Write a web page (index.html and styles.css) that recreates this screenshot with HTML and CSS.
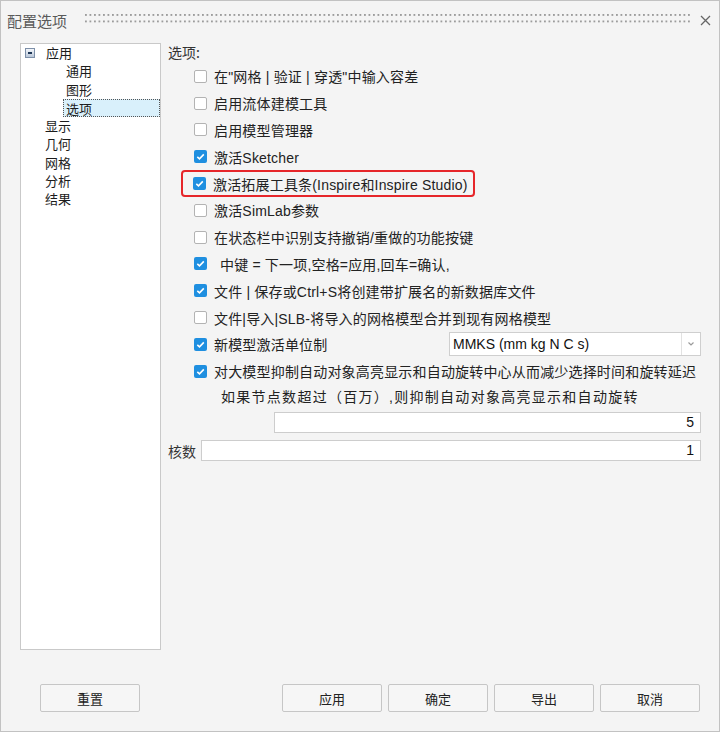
FILE: index.html
```html
<!DOCTYPE html>
<html lang="zh">
<head>
<meta charset="utf-8">
<title>配置选项</title>
<link rel="stylesheet" href="styles.css">
</head>
<body>
<div class="window">
  <div class="titlebar">
    <span class="title">配置选项</span>
    <span class="grip"></span>
    <span class="close"><svg width="11" height="11" viewBox="0 0 11 11"><path d="M1 1L10 10M10 1L1 10" stroke="#666" stroke-width="1.3" fill="none"/></svg></span>
  </div>
  <div class="main">
    <div class="tree">
      <div class="node root"><span class="exp"><i></i></span><span>应用</span></div>
      <div class="node child">通用</div>
      <div class="node child">图形</div>
      <div class="node child"><span class="sel">选项</span></div>
      <div class="node top">显示</div>
      <div class="node top">几何</div>
      <div class="node top">网格</div>
      <div class="node top">分析</div>
      <div class="node top">结果</div>
    </div>
    <div class="options">
      <div class="head">选项:</div>
      <div class="list">
        <div class="row"><span class="cb"></span><span class="lbl">在"网格 | 验证 | 穿透"中输入容差</span></div>
        <div class="row"><span class="cb"></span><span class="lbl">启用流体建模工具</span></div>
        <div class="row"><span class="cb"></span><span class="lbl">启用模型管理器</span></div>
        <div class="row"><span class="cb on"><svg width="13" height="13" viewBox="0 0 13 13"><path d="M3.3 6.8L5.5 8.8L9.8 4.4" stroke="#fff" stroke-width="1.6" fill="none"/></svg></span><span class="lbl">激活Sketcher</span></div>
        <div class="row"><span class="hl"><span class="cb on"><svg width="13" height="13" viewBox="0 0 13 13"><path d="M3.3 6.8L5.5 8.8L9.8 4.4" stroke="#fff" stroke-width="1.6" fill="none"/></svg></span><span class="lbl">激活拓展工具条(Inspire和Inspire Studio)</span></span></div>
        <div class="row"><span class="cb"></span><span class="lbl">激活SimLab参数</span></div>
        <div class="row"><span class="cb"></span><span class="lbl">在状态栏中识别支持撤销/重做的功能按键</span></div>
        <div class="row"><span class="cb on"><svg width="13" height="13" viewBox="0 0 13 13"><path d="M3.3 6.8L5.5 8.8L9.8 4.4" stroke="#fff" stroke-width="1.6" fill="none"/></svg></span><span class="lbl pad">中键 = 下一项,空格=应用,回车=确认,</span></div>
        <div class="row"><span class="cb on"><svg width="13" height="13" viewBox="0 0 13 13"><path d="M3.3 6.8L5.5 8.8L9.8 4.4" stroke="#fff" stroke-width="1.6" fill="none"/></svg></span><span class="lbl">文件 | 保存或Ctrl+S将创建带扩展名的新数据库文件</span></div>
        <div class="row"><span class="cb"></span><span class="lbl">文件|导入|SLB-将导入的网格模型合并到现有网格模型</span></div>
        <div class="row"><span class="cb on"><svg width="13" height="13" viewBox="0 0 13 13"><path d="M3.3 6.8L5.5 8.8L9.8 4.4" stroke="#fff" stroke-width="1.6" fill="none"/></svg></span><span class="lbl">新模型激活单位制</span>
          <span class="combo"><span class="combo-text">MMKS (mm kg N C s)</span><span class="combo-btn"><svg width="8" height="6" viewBox="0 0 8 6"><path d="M1.5 1.5L4 4L6.5 1.5" stroke="#9a9a9a" stroke-width="1.2" fill="none"/></svg></span></span>
        </div>
        <div class="row"><span class="cb on"><svg width="13" height="13" viewBox="0 0 13 13"><path d="M3.3 6.8L5.5 8.8L9.8 4.4" stroke="#fff" stroke-width="1.6" fill="none"/></svg></span><span class="lbl">对大模型抑制自动对象高亮显示和自动旋转中心从而减少选择时间和旋转延迟</span></div>
      </div>
      <div class="note">如果节点数超过（百万）,则抑制自动对象高亮显示和自动旋转</div>
      <div class="field-row indent"><span class="field">5</span></div>
      <div class="field-row"><span class="flabel">核数</span><span class="field">1</span></div>
    </div>
  </div>
  <div class="footer">
    <button class="btn">重置</button>
    <div class="right-btns">
      <button class="btn">应用</button>
      <button class="btn">确定</button>
      <button class="btn">导出</button>
      <button class="btn">取消</button>
    </div>
  </div>
</div>
</body>
</html>
```
FILE: styles.css
```css
html, body {
  margin: 0;
  padding: 0;
  background: #f4f4f4;
}
.window {
  width: 720px;
  height: 732px;
  box-sizing: border-box;
  border: 1px solid #c2c2c2;
  background: #f4f4f4;
  display: flex;
  flex-direction: column;
  font-family: "Liberation Sans", "Noto Sans CJK SC", sans-serif;
  color: #222;
}
.titlebar {
  height: 42px;
  display: flex;
  align-items: center;
  padding-left: 6px;
  padding-right: 8px;
  box-sizing: border-box;
}
.title {
  font-family: "Noto Sans CJK SC", sans-serif;
  font-size: 15px;
  color: #5a5a5a;
  margin-top: -4px;
  width: 78px;
}
.grip {
  width: 606px;
  height: 12px;
  margin-top: -4px;
  background-image: radial-gradient(circle at 1px 1px, #9c9c9c 0.9px, transparent 1.3px);
  background-size: 4.5px 6.5px;
}
.close {
  margin-left: 9px;
  margin-top: -4px;
  display: flex;
}
.main {
  display: flex;
  padding-left: 19px;
  padding-right: 18px;
  gap: 7px;
}
.tree {
  width: 141px;
  height: 607px;
  box-sizing: border-box;
  border: 1px solid #c9c9c9;
  background: #fff;
  font-family: "Noto Sans CJK SC", sans-serif;
  font-size: 13px;
  color: #1c1c1c;
}
.node {
  height: 18.25px;
  line-height: 18px;
  display: flex;
  align-items: center;
}
.node.root { padding-left: 4px; }
.node.top { padding-left: 24px; }
.node.child { padding-left: 45px; }
.exp {
  width: 10px;
  height: 10px;
  box-sizing: border-box;
  border: 1px solid #7d8fa8;
  background: linear-gradient(#f4f7fb, #b9c6d8);
  margin-right: 11px;
  position: relative;
  display: inline-block;
}
.exp i {
  position: absolute;
  left: 2px;
  top: 3px;
  width: 4px;
  height: 2px;
  background: #1d3655;
}
.sel {
  flex: 1;
  margin-left: -3px;
  padding-left: 2px;
  height: 18px;
  line-height: 17px;
  box-sizing: border-box;
  border: 1px dotted #555;
  background: #d9f0fb;
}
.options {
  width: 533px;
  font-size: 14px;
}
.head {
  height: 18px;
  line-height: 18px;
  color: #333;
  font-family: "Noto Sans CJK SC", sans-serif;
  margin-bottom: 2px;
}
.row {
  height: 26.8px;
  display: flex;
  align-items: center;
  padding-left: 26px;
}
.cb {
  width: 13px;
  height: 13px;
  box-sizing: border-box;
  border: 1px solid #b3b3b3;
  border-radius: 2px;
  background: #fff;
  flex: none;
  display: flex;
}
.cb.on {
  border: none;
  background: #1f8fe0;
}
.lbl {
  margin-left: 7px;
  white-space: nowrap;
  letter-spacing: 0.18px;
}
.lbl.pad { margin-left: 13px; }
.hl {
  display: flex;
  align-items: center;
  height: 27px;
  box-sizing: border-box;
  border: 2px solid #e6262a;
  border-radius: 4px;
  margin-left: -13px;
  padding-left: 10px;
  padding-right: 5px;
}
.combo {
  margin-left: auto;
  width: 252px;
  height: 24px;
  box-sizing: border-box;
  border: 1px solid #cfcfcf;
  background: #fff;
  display: flex;
  align-items: center;
}
.combo-text {
  flex: 1;
  padding-left: 3px;
  font-size: 14px;
  color: #111;
}
.combo-btn {
  width: 18px;
  height: 22px;
  border-left: 1px solid #e2e2e2;
  display: flex;
  align-items: center;
  justify-content: center;
}
.note {
  height: 25px;
  line-height: 25px;
  padding-left: 53px;
  letter-spacing: 1.28px;
  white-space: nowrap;
}
.field-row {
  display: flex;
  align-items: center;
  height: 22px;
  margin-bottom: 6px;
}
.field-row.indent { padding-left: 106px; margin-top: 2px; }
.flabel {
  width: 33px;
  font-family: "Noto Sans CJK SC", sans-serif;
  color: #333;
}
.field {
  flex: 1;
  height: 21px;
  box-sizing: border-box;
  border: 1px solid #cdcdcd;
  background: #fff;
  text-align: right;
  padding-right: 6px;
  line-height: 19px;
  font-size: 14px;
  color: #111;
}
.footer {
  display: flex;
  justify-content: space-between;
  padding: 34px 19px 0 39px;
}
.right-btns {
  display: flex;
  gap: 6px;
}
.btn {
  width: 100px;
  height: 28px;
  box-sizing: border-box;
  border: 1px solid #c6c6c6;
  border-radius: 2px;
  background: #f6f6f6;
  font-family: "Noto Sans CJK SC", sans-serif;
  font-size: 13px;
  color: #222;
  padding: 0;
  margin: 0;
}
```
